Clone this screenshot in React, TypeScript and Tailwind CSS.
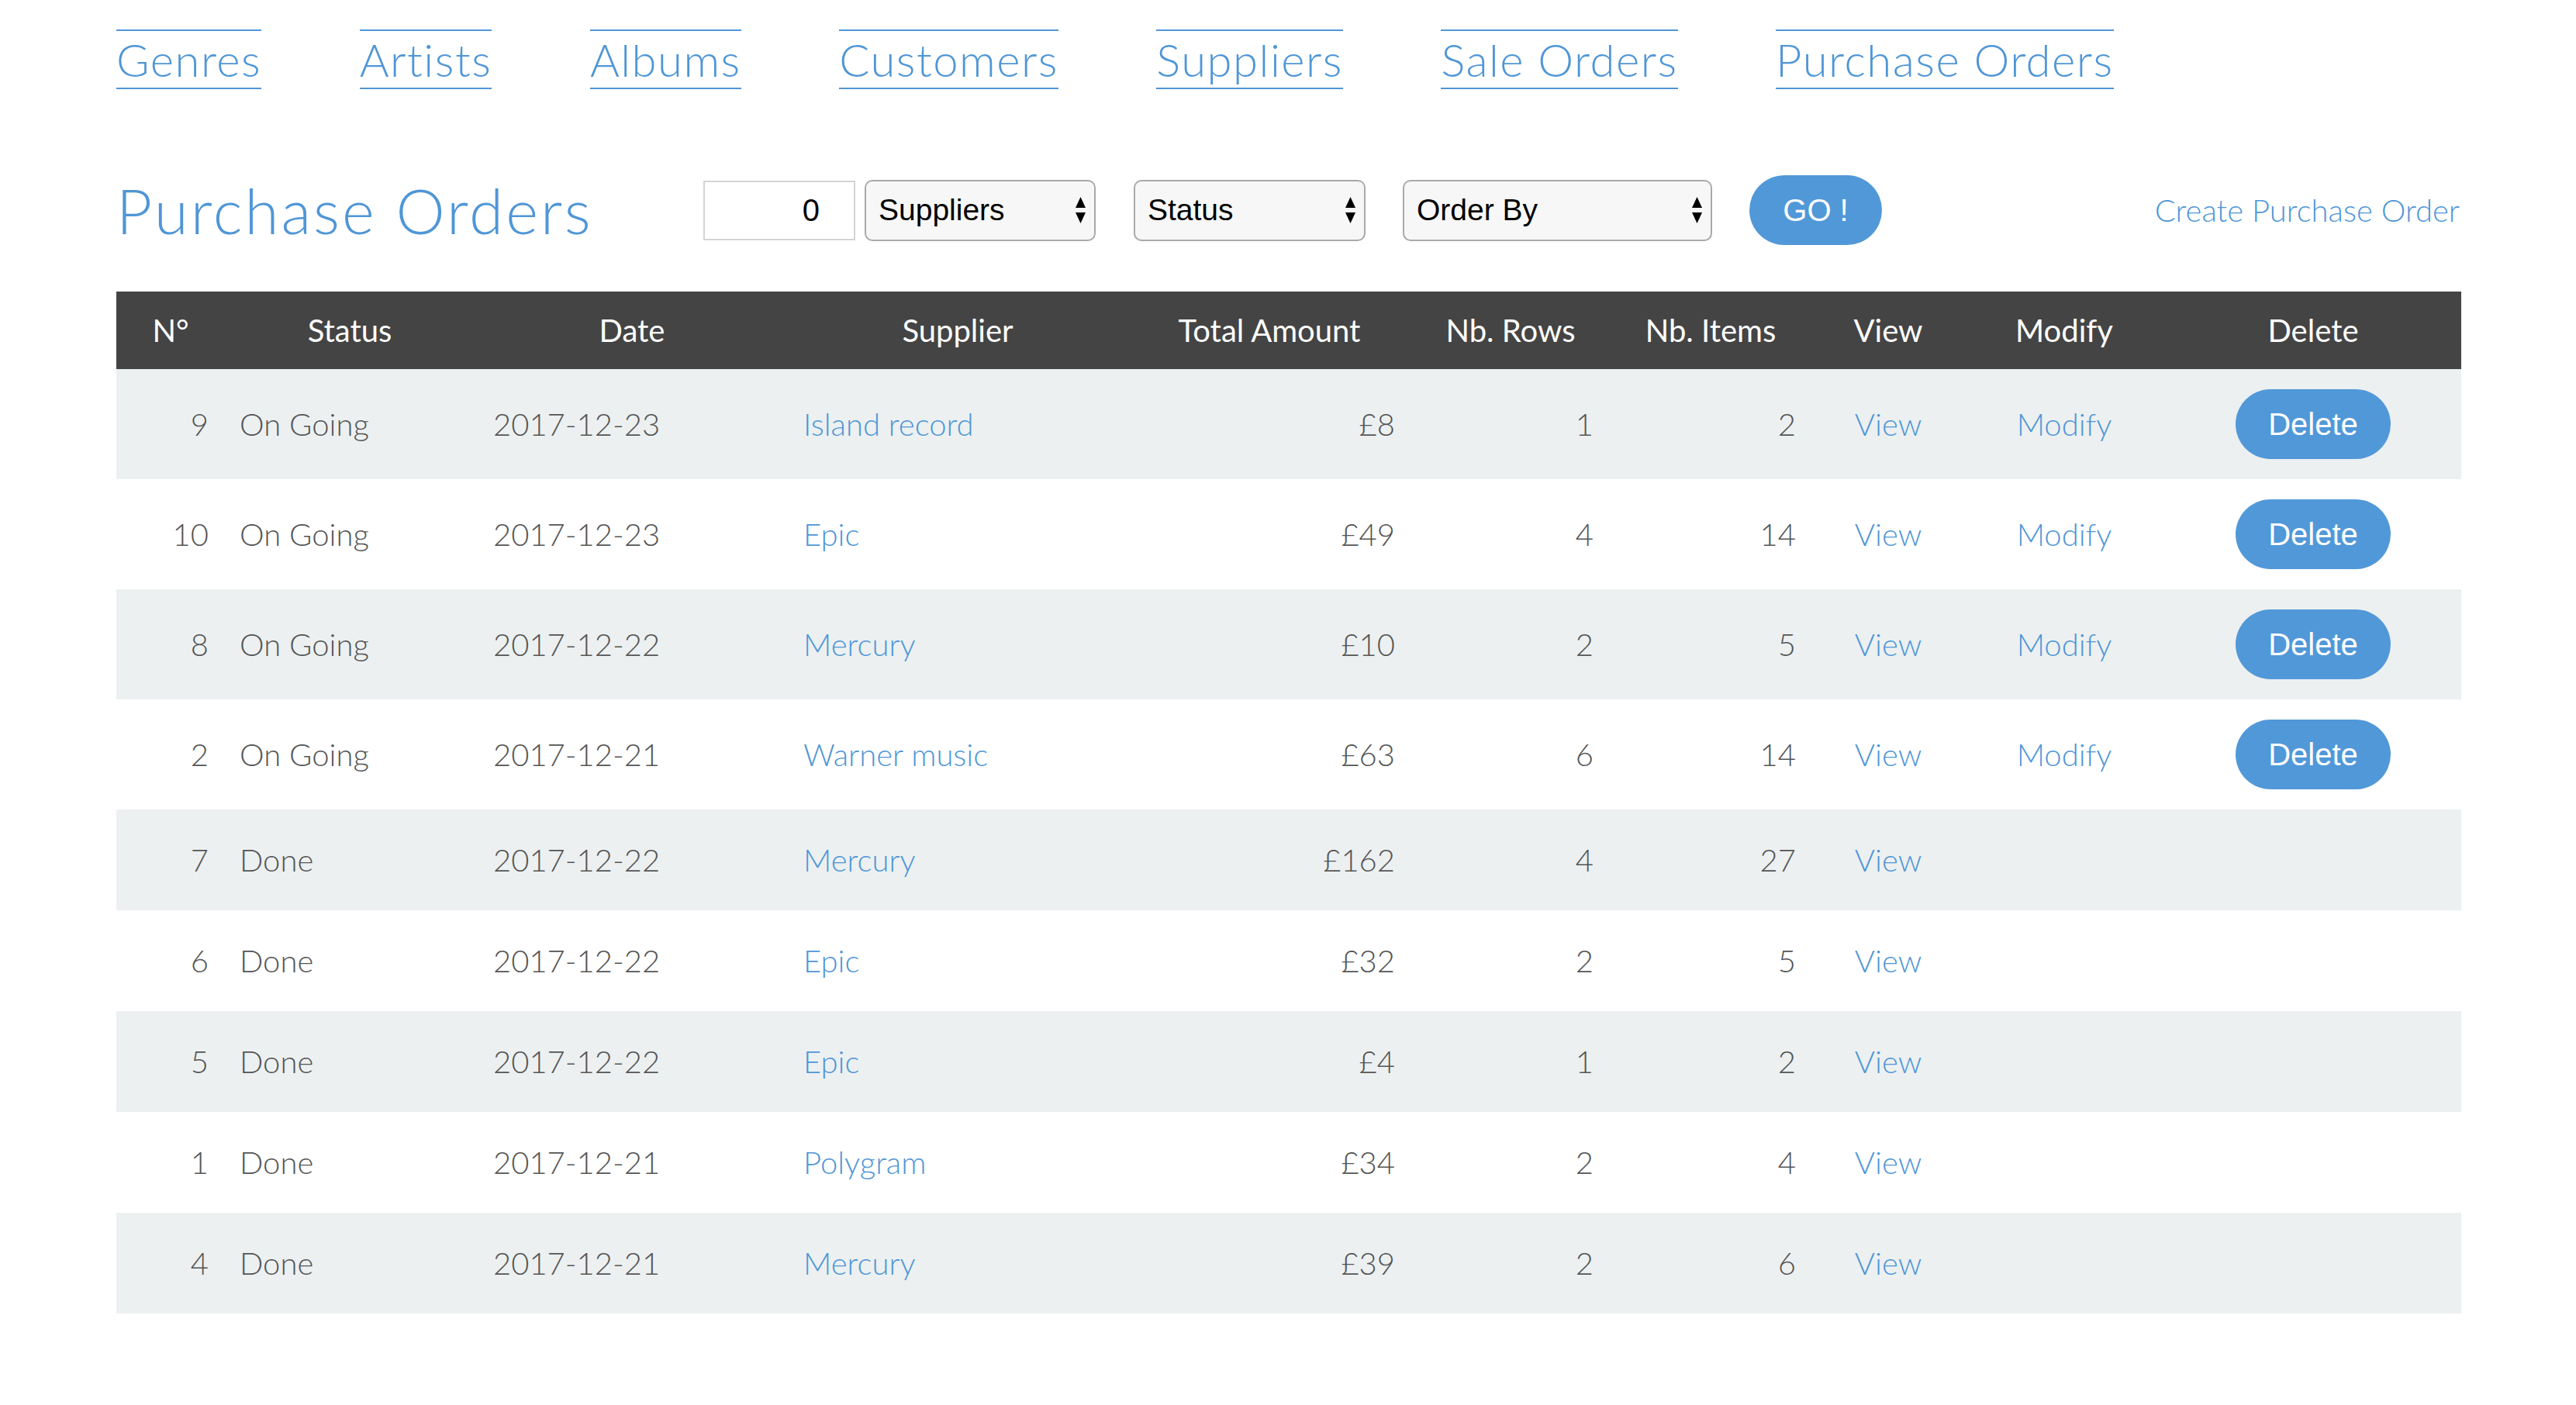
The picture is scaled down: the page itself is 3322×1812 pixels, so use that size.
import React from "react";

type Order = {
  id: number;
  status: string;
  date: string;
  supplier: string;
  amount: string;
  rows: number;
  items: number;
  editable: boolean;
};

const orders: Order[] = [
  { id: 9, status: "On Going", date: "2017-12-23", supplier: "Island record", amount: "£8", rows: 1, items: 2, editable: true },
  { id: 10, status: "On Going", date: "2017-12-23", supplier: "Epic", amount: "£49", rows: 4, items: 14, editable: true },
  { id: 8, status: "On Going", date: "2017-12-22", supplier: "Mercury", amount: "£10", rows: 2, items: 5, editable: true },
  { id: 2, status: "On Going", date: "2017-12-21", supplier: "Warner music", amount: "£63", rows: 6, items: 14, editable: true },
  { id: 7, status: "Done", date: "2017-12-22", supplier: "Mercury", amount: "£162", rows: 4, items: 27, editable: false },
  { id: 6, status: "Done", date: "2017-12-22", supplier: "Epic", amount: "£32", rows: 2, items: 5, editable: false },
  { id: 5, status: "Done", date: "2017-12-22", supplier: "Epic", amount: "£4", rows: 1, items: 2, editable: false },
  { id: 1, status: "Done", date: "2017-12-21", supplier: "Polygram", amount: "£34", rows: 2, items: 4, editable: false },
  { id: 4, status: "Done", date: "2017-12-21", supplier: "Mercury", amount: "£39", rows: 2, items: 6, editable: false },
];

const navLinks = ["Genres", "Artists", "Albums", "Customers", "Suppliers", "Sale Orders", "Purchase Orders"];

const GRID = "grid grid-cols-[140px_322px_406px_434px_370px_252px_264px_194px_260px_382px]";

function Arrows() {
  return (
    <svg width="13" height="34" viewBox="0 0 13 34" className="shrink-0">
      <polygon points="6.5,0 13,14 0,14" fill="#000" />
      <polygon points="0,20 13,20 6.5,34" fill="#000" />
    </svg>
  );
}

function FakeSelect({ label, width }: { label: string; width: string }) {
  return (
    <div
      className={`${width} h-[79px] flex items-center justify-between pl-[16px] pr-[11px] rounded-[10px] border-2 border-[#a9a9a9] bg-[#f7f7f7] text-black text-[39px] font-['Liberation_Sans',Arial,sans-serif]`}
    >
      <span>{label}</span>
      <Arrows />
    </div>
  );
}

export default function App() {
  return (
    <div className="min-h-[1812px] bg-white font-['Lato',sans-serif] text-[#555555]">
      <div className="w-[3024px] ml-[150px]">
        {/* Navigation */}
        <nav className="flex gap-[126.5px] pt-[38px]">
          {navLinks.map((l) => (
            <a
              key={l}
              className="block border-y-2 border-[#4f96d6] text-[#4f96d6] text-[58px] tracking-[1.5px] leading-[73px] font-light"
            >
              {l}
            </a>
          ))}
        </nav>

        {/* Title row */}
        <div className="flex items-center mt-[111px] h-[90px]">
          <h1 className="w-[757px] shrink-0 text-[80px] tracking-[3px] leading-[80px] font-light text-[#4f96d6]">
            Purchase Orders
          </h1>
          <div className="w-[196px] h-[77px] border-2 border-[#d4d4d4] flex items-center justify-end pr-[44px] text-black text-[40px] font-['Liberation_Sans',Arial,sans-serif]">
            0
          </div>
          <div className="ml-[12px]">
            <FakeSelect label="Suppliers" width="w-[298px]" />
          </div>
          <div className="ml-[49px]">
            <FakeSelect label="Status" width="w-[299px]" />
          </div>
          <div className="ml-[48px]">
            <FakeSelect label="Order By" width="w-[399px]" />
          </div>
          <button className="ml-[48px] w-[171px] h-[90px] rounded-full bg-[#5198d8] text-white text-[40px] font-['Liberation_Sans',Arial,sans-serif]">
            GO !
          </button>
          <a className="ml-auto mr-[2px] text-[40px] font-light text-[#4f96d6]">Create Purchase Order</a>
        </div>

        {/* Table */}
        <div className="mt-[60px]">
          <div className={`${GRID} h-[100px] items-center bg-[#444444] text-white text-[40px] text-center`}>
            <div>N°</div>
            <div>Status</div>
            <div>Date</div>
            <div>Supplier</div>
            <div>Total Amount</div>
            <div>Nb. Rows</div>
            <div>Nb. Items</div>
            <div>View</div>
            <div>Modify</div>
            <div>Delete</div>
          </div>
          {orders.map((o, i) => (
            <div
              key={o.id}
              className={`${GRID} items-center text-[40px] font-light ${o.editable ? "h-[142px]" : "h-[130px]"} ${
                i % 2 === 0 ? "bg-[#ecf0f1]" : "bg-white"
              }`}
            >
              <div className="text-right pr-[21px]">{o.id}</div>
              <div className="pl-[19px]">{o.status}</div>
              <div className="pl-[24px]">{o.date}</div>
              <div className="pl-[18px] text-[#4f96d6]">{o.supplier}</div>
              <div className="text-right pr-[23px]">{o.amount}</div>
              <div className="text-right pr-[19px]">{o.rows}</div>
              <div className="text-right pr-[22px]">{o.items}</div>
              <div className="text-center text-[#4f96d6]">View</div>
              <div className="text-center text-[#4f96d6]">{o.editable ? "Modify" : ""}</div>
              <div className="flex justify-center">
                {o.editable && (
                  <button className="w-[200px] h-[90px] rounded-full bg-[#5198d8] text-white text-[40px] font-normal font-['Liberation_Sans',Arial,sans-serif]">
                    Delete
                  </button>
                )}
              </div>
            </div>
          ))}
        </div>
      </div>
    </div>
  );
}
